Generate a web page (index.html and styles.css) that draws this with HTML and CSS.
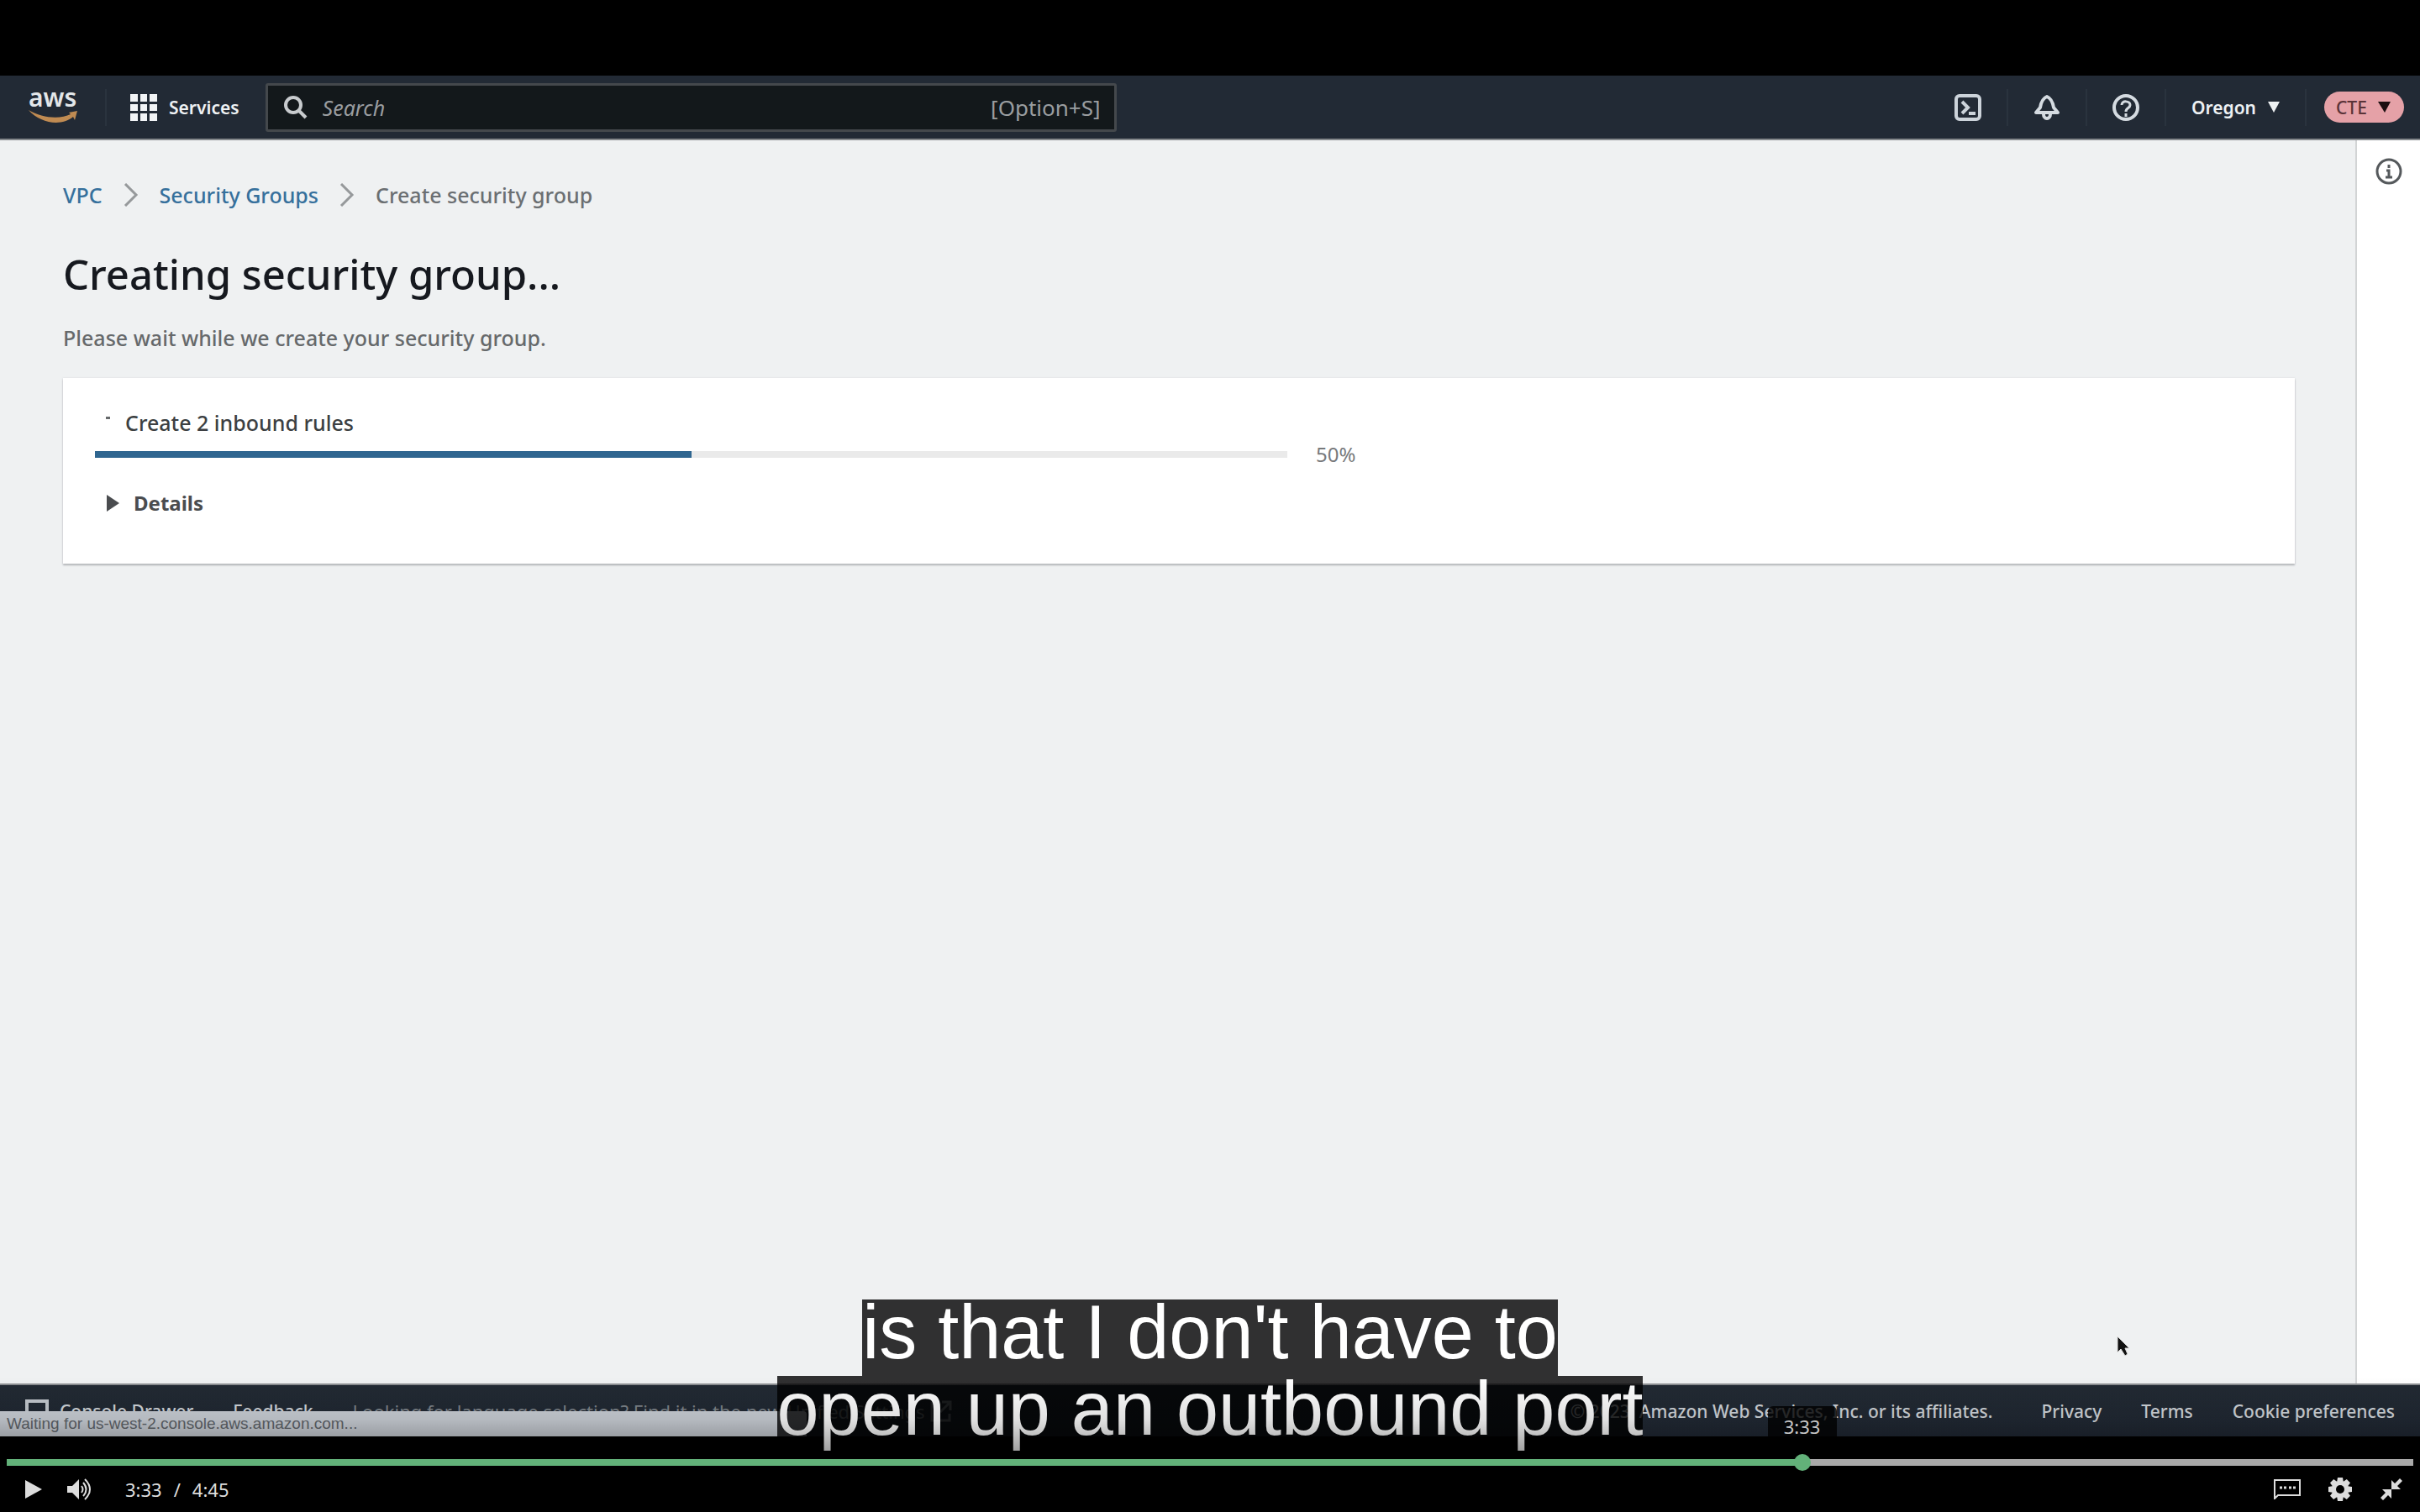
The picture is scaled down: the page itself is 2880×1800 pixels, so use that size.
FILE: index.html
```html
<!DOCTYPE html>
<html lang="en">
<head>
<meta charset="utf-8">
<title>Creating security group</title>
<link rel="stylesheet" href="styles.css">
</head>
<body>
<div class="player">
  <div class="screen">
    <header class="topnav">
      <a class="logo" href="#" aria-label="aws">
        <svg width="60" height="68" viewBox="0 -10 60 68">
          <text class="logo-word" x="0" y="23">aws</text>
          <path d="M0 27C16 37 38 38 50 32L48 30L58 28L55 39L53 35C39 47 14 43 0 27Z" fill="#c08b52"/>
        </svg>
      </a>
      <span class="sep"></span>
      <button class="services" type="button">
        <svg width="32" height="32" viewBox="0 0 32 32" fill="#f2f4f6">
          <path d="M0 0h9v9H0zM12 0h8v9h-8zM23 0h9v9h-9zM0 12h9v8H0zM12 12h8v8h-8zM23 12h9v8h-9zM0 23h9v9H0zM12 23h8v9h-8zM23 23h9v9h-9z"/>
        </svg>
        Services
      </button>
      <label class="search">
        <svg width="28" height="28" viewBox="0 0 28 28" fill="none" stroke="#c8cbce" stroke-width="4">
          <circle cx="11" cy="11" r="9"/><path d="M17 17l9 9"/>
        </svg>
        <input type="text" placeholder="Search" aria-label="Search">
        <span>[Option+S]</span>
      </label>
      <div class="tools">
        <button type="button" aria-label="CloudShell">
          <svg width="32" height="32" viewBox="0 0 32 32" fill="none" stroke="#ccd3da" stroke-width="4">
            <rect x="2" y="2" width="28" height="28" rx="4"/><path d="M9 9l7 7-7 7M17 23h8"/>
          </svg>
        </button>
        <span class="sep"></span>
        <button type="button" aria-label="Notifications">
          <svg width="32" height="34" viewBox="0 0 32 34" fill="none" stroke="#d5dbe1" stroke-width="4" stroke-linejoin="round">
            <path d="M16 4C11 6 9 11 8 17L3 23H29L24 17C23 11 21 6 16 4Z"/><path d="M12 25a4 5 0 0 0 8 0"/>
          </svg>
        </button>
        <span class="sep"></span>
        <button type="button" aria-label="Help">
          <svg width="32" height="32" viewBox="0 0 32 32" fill="none" stroke="#d5dbe1" stroke-width="4">
            <circle cx="16" cy="16" r="14"/><path d="M11 13c0-6 10-5 10 0c0 4-5 3-5 8M16 23v4" stroke-width="3"/>
          </svg>
        </button>
        <span class="sep"></span>
        <button class="region" type="button">Oregon
          <svg width="14" height="13" viewBox="0 0 14 13" fill="#eef1f3"><path d="M0 0h14L7 13z"/></svg>
        </button>
        <span class="sep"></span>
        <button class="account" type="button">CTE
          <svg width="15" height="13" viewBox="0 0 15 13" fill="#1b0e10"><path d="M0 0h15L8 13z"/></svg>
        </button>
      </div>
    </header>

    <div class="body">
      <main class="content">
        <nav class="crumbs" aria-label="Breadcrumbs">
          <a href="#">VPC</a>
          <svg width="18" height="28" viewBox="0 0 18 28"><path d="M2 1l13 13L2 27"/></svg>
          <a href="#">Security Groups</a>
          <svg width="18" height="28" viewBox="0 0 18 28"><path d="M2 1l13 13L2 27"/></svg>
          <span>Create security group</span>
        </nav>
        <h1>Creating security group...</h1>
        <p class="lead">Please wait while we create your security group.</p>
        <section class="card">
          <div class="step"><span class="spinner"></span><label for="step">Create 2 inbound rules</label></div>
          <div class="meter">
            <progress id="step" value="50" max="100"></progress>
            <span>50%</span>
          </div>
          <details>
            <summary>
              <svg width="15" height="20" viewBox="0 0 15 20" fill="#4a4c4f"><path d="M0 0l15 10L0 20z"/></svg>
              Details
            </summary>
          </details>
        </section>
      </main>
      <aside class="side">
        <button type="button" aria-label="Info">
          <svg width="32" height="32" viewBox="0 0 32 32" fill="none" stroke="#55595c" stroke-width="3">
            <circle cx="16" cy="16" r="14"/><path d="M16 8v4M13 15h3v8M12 23h8"/>
          </svg>
        </button>
      </aside>
    </div>

    <footer class="footer">
      <button class="drawer" type="button">
        <svg width="28" height="28" viewBox="0 0 28 28" fill="none" stroke="#c5cad0" stroke-width="4"><rect x="2" y="2" width="24" height="24"/></svg>
        Console Drawer
      </button>
      <a href="#">Feedback</a>
      <span class="hint">Looking for language selection? Find it in the new <a href="#">Unified Settings</a>
        <svg width="26" height="26" viewBox="0 0 26 26" fill="none" stroke="#7f858b" stroke-width="3"><path d="M10 3H2v21h21v-8M14 2h10v10M24 2L12 14"/></svg>
      </span>
      <span class="copyright">© 2023, Amazon Web Services, Inc. or its affiliates.</span>
      <a href="#">Privacy</a>
      <a href="#">Terms</a>
      <a href="#">Cookie preferences</a>
      <div class="status">Waiting for us-west-2.console.aws.amazon.com...</div>
    </footer>
  </div>

  <svg class="pointer" width="18" height="26" viewBox="0 0 18 26"><path d="M2 1V20L6 16L11 24L14 22L11 15H16Z" fill="#111" stroke="#ddd"/></svg>

  <div class="captions">
    <div>is that I don't have to</div>
    <div>open up an outbound port</div>
  </div>

  <div class="controls">
    <div class="timeline">
      <output class="tip" for="seek">3:33</output>
      <input id="seek" type="range" min="0" max="1000" value="748" aria-label="Seek">
    </div>
    <div class="buttons">
      <div class="group">
        <button type="button" aria-label="Play">
          <svg width="20" height="22" viewBox="0 0 20 22" fill="#ddd"><path d="M0 0l20 11L0 22z"/></svg>
        </button>
        <button type="button" aria-label="Volume">
          <svg width="30" height="26" viewBox="0 0 30 26" fill="none" stroke="#ddd" stroke-width="2">
            <path d="M0 9h6l8-8v24l-8-8H0z" fill="#ddd" stroke="none"/>
            <path d="M17 9q3 4 0 8M19 5q7 8 0 16M21 1q12 12 0 24"/>
          </svg>
        </button>
        <div class="time"><span>3:33</span><span>/</span><span>4:45</span></div>
      </div>
      <div class="group group-right">
        <button type="button" aria-label="Captions">
          <svg width="32" height="24" viewBox="0 0 32 24" fill="none" stroke="#ddd" stroke-width="2">
            <path d="M1 1h30v18H5l-4 4z"/><path d="M7 10h3M12 10h3M18 10h3M23 10h3" stroke-width="3"/>
          </svg>
        </button>
        <button type="button" aria-label="Settings">
          <svg width="28" height="28" viewBox="0 0 28 28">
            <g fill="#ddd"><path id="bar" d="M11 0h6l1 6v16l-1 6h-6l-1-6V6z"/>
            <use href="#bar" transform="rotate(45 14 14)"/><use href="#bar" transform="rotate(90 14 14)"/><use href="#bar" transform="rotate(135 14 14)"/>
            <circle cx="14" cy="14" r="10"/></g><circle cx="14" cy="14" r="5" fill="#000"/>
          </svg>
        </button>
        <button type="button" aria-label="Exit full screen">
          <svg width="28" height="28" viewBox="0 0 28 28" fill="#ddd">
            <path d="M14 3V14H25L21 10L27 4L24 1L18 7ZM14 25V14H3L7 18L1 24L4 27L10 21Z"/>
          </svg>
        </button>
      </div>
    </div>
  </div>
</div>
</body>
</html>
```
FILE: styles.css
```css
* { box-sizing: border-box; }

body {
  margin: 0;
  background: #000;
  font-family: "Noto Sans", "Open Sans", sans-serif;
}

button {
  display: inline-flex;
  align-items: center;
  padding: 0;
  border: 0;
  background: none;
  color: inherit;
  font: inherit;
}

a { color: inherit; text-decoration: none; }
svg { display: block; flex: none; }

/* Player frame with letterbox bars above and below the video */
.player {
  position: relative;
  min-height: 100vh;
  padding: 90px 0;
  display: flex;
  flex-direction: column;
  overflow: hidden;
}

.screen {
  flex: 1;
  display: flex;
  flex-direction: column;
}

/* Top navigation */
.topnav {
  display: flex;
  align-items: center;
  height: 77px;
  padding: 0 19px 0 34px;
  background: #222a35;
  color: #eef1f3;
  font-size: 21px;
  font-weight: 600;
  border-bottom: 2px solid #85898c;
}

.logo-word {
  font: 600 30px "Noto Sans", sans-serif;
  fill: #e3e7ea;
}

.sep {
  width: 2px;
  height: 44px;
  background: #2a333e;
}

.topnav > .sep { margin: 0 28px 0 31px; }

.services { gap: 14px; margin-right: 31px; }

.search {
  flex: 0 1 1013px;
  display: flex;
  align-items: center;
  height: 58px;
  padding: 0 16px 0 19px;
  border: 3px solid #44484c;
  border-radius: 3px;
  background: #13181b;
  color: #9a9da0;
  font-size: 26px;
  font-weight: 400;
}

.search input {
  flex: 1;
  min-width: 0;
  padding: 0 18px;
  border: 0;
  background: none;
  font: italic 25px "Noto Sans", sans-serif;
}

.search input::placeholder { color: #9a9da0; opacity: 1; }

.tools {
  display: flex;
  align-items: center;
  gap: 30px;
  margin-left: auto;
}

.region { gap: 14px; }

.account {
  justify-content: space-between;
  width: 95px;
  height: 37px;
  margin-left: -9px;
  padding: 0 16px 0 14px;
  border-radius: 19px;
  background: #e5a1a7;
  color: #5a3338;
  font-weight: 500;
}

/* Page body */
.body {
  flex: 1;
  display: flex;
  background: #eff1f2;
}

.content {
  flex: 1;
  padding: 49px 72px 0 75px;
}

.crumbs {
  display: flex;
  align-items: center;
  gap: 25px;
  font-size: 25px;
  font-weight: 500;
  line-height: 32px;
  color: #6b6f72;
}

.crumbs a { color: #36709c; }
.crumbs svg { fill: none; stroke: #96999b; stroke-width: 3; }

h1 {
  margin: 46px 0 28px;
  font-size: 49px;
  line-height: 64px;
  font-weight: 500;
  color: #16191f;
}

.lead {
  margin: 0 0 32px;
  font-size: 25px;
  font-weight: 500;
  line-height: 32px;
  color: #66696b;
}

.card {
  padding: 37px 38px 56px;
  background: #fff;
  box-shadow: 0 2px 2px #b4b7ba, 0 0 2px #d5d7d9;
  line-height: 32px;
}

.step {
  display: flex;
  gap: 18px;
  padding-left: 13px;
  font-size: 25px;
  font-weight: 500;
  color: #3c3f42;
}

.spinner {
  width: 5px;
  height: 3px;
  margin-top: 9px;
  background: #66696b;
}

.meter {
  display: flex;
  align-items: center;
  gap: 34px;
  margin: 6px 0 26px;
  font-size: 24px;
  color: #77797b;
}

.meter progress {
  appearance: none;
  width: 55%;
  height: 8px;
  border: 0;
  background: #eaeaea;
}

.meter progress::-webkit-progress-bar { background: #eaeaea; }
.meter progress::-webkit-progress-value { background: #2f6690; }

summary {
  display: flex;
  align-items: center;
  gap: 17px;
  padding-left: 14px;
  font-size: 24px;
  font-weight: 700;
  color: #4a4c4f;
  list-style: none;
}

.side {
  width: 77px;
  padding: 21px 0 0 22px;
  border-left: 2px solid #d2d4d5;
  background: #fff;
}

/* Console footer with the browser's status bubble over it */
.footer {
  position: relative;
  display: flex;
  align-items: center;
  gap: 47px;
  height: 63px;
  padding: 0 30px;
  border-top: 2px solid #8b8e91;
  background: linear-gradient(#222a33, #212935);
  color: #d3d8dd;
  font-size: 21px;
  font-weight: 500;
  white-space: nowrap;
}

.drawer { gap: 13px; }

.hint {
  display: flex;
  align-items: center;
  gap: 6px;
  font-size: 22px;
  font-weight: 400;
  color: #7f858b;
}

.copyright { margin: 0 11px 0 auto; }

.status {
  position: absolute;
  left: 0;
  bottom: 0;
  width: calc(100% / 3);
  height: 30px;
  padding-left: 8px;
  border-radius: 0 4px 0 0;
  background: #ced3da;
  color: #62676d;
  font: 19px/30px "Liberation Sans", Arial, sans-serif;
}

.pointer {
  position: absolute;
  right: 344px;
  bottom: 184px;
}

/* Captions */
.captions {
  position: absolute;
  left: 0;
  right: 0;
  bottom: 71px;
  display: flex;
  flex-direction: column;
  align-items: center;
  color: #fff;
  font: 90px/78px "Liberation Sans", Arial, sans-serif;
}

.captions div {
  padding-bottom: 13px;
  background: rgba(0, 0, 0, 0.8);
}

/* Video controls, fading in over the bottom of the video */
.controls {
  position: absolute;
  left: 0;
  right: 0;
  bottom: 0;
  height: 160px;
  padding-bottom: 6px;
  display: flex;
  flex-direction: column;
  justify-content: flex-end;
  background: linear-gradient(transparent, rgba(0, 0, 0, 0.12) 50px, rgba(0, 0, 0, 0.25) 70px, rgba(0, 0, 0, 0.37) 87px, rgba(0, 0, 0, 0.8));
  color: #ddd;
  font-size: 22px;
}

.timeline {
  position: relative;
  display: flex;
  height: 20px;
  margin: 0 8px;
}

.timeline input {
  appearance: none;
  width: 100%;
  height: 20px;
  margin: 0;
  background: none;
}

.timeline input::-webkit-slider-runnable-track {
  height: 8px;
  background: linear-gradient(90deg, #62b179 74.8%, #a9a9a9 74.8%);
}

.timeline input::-webkit-slider-thumb {
  appearance: none;
  width: 20px;
  height: 20px;
  margin-top: -6px;
  border-radius: 50%;
  background: #62b179;
}

.tip {
  position: absolute;
  left: 74.6%;
  bottom: 31px;
  width: 82px;
  height: 46px;
  padding-top: 9px;
  transform: translateX(-50%);
  border-radius: 6px;
  background: rgba(0, 0, 0, 0.8);
  color: #c4c4c4;
  line-height: 30px;
  text-align: center;
}

.buttons {
  display: flex;
  align-items: center;
  justify-content: space-between;
  height: 43px;
  padding: 0 20px 0 30px;
}

.group {
  display: flex;
  align-items: center;
  gap: 30px;
}

.group-right { gap: 33px; }

.time {
  display: flex;
  gap: 14px;
  margin-left: 9px;
}
```
